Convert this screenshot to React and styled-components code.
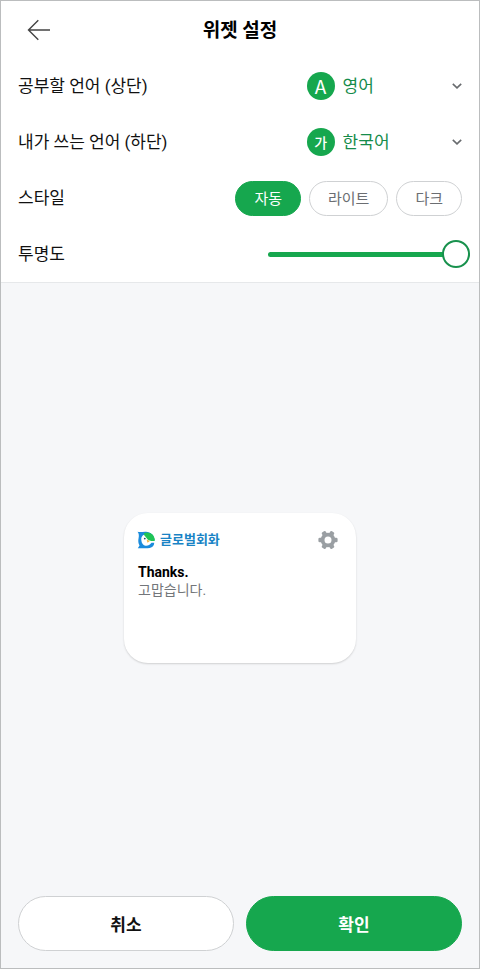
import React, { useState } from "react";
import styled, { createGlobalStyle } from "styled-components";

const green = "#16a74e";

const languages = [
  { code: "en", name: "영어", mark: "A" },
  { code: "ko", name: "한국어", mark: "가" },
];

const styles = ["자동", "라이트", "다크"];

function LanguageRow({ id, label, initial }) {
  const [code, setCode] = useState(initial);
  const current = languages.find((item) => item.code === code);

  return (
    <Row>
      <Label htmlFor={id}>{label}</Label>
      <Picker>
        <Mark aria-hidden="true" $latin={current.code === "en"}>
          {current.mark}
        </Mark>
        <Select id={id} value={code} onChange={(e) => setCode(e.target.value)}>
          {languages.map((item) => (
            <option key={item.code} value={item.code}>
              {item.name}
            </option>
          ))}
        </Select>
        <Chevron width="10" height="6" viewBox="0 0 10 6" aria-hidden="true">
          <path d="M.8.800 5 4.800 9.200.800" />
        </Chevron>
      </Picker>
    </Row>
  );
}

function Logo() {
  return (
    <svg width="18" height="18" viewBox="0 0 18 18" aria-hidden="true">
      <path
        fill="#1b8bdc"
        d="M.5.800C3.500 1.600 6 .6 9 .8c4.800.3 8.300 3.600 8.500 8L17 13.500c-1 2.600-3.200 3.800-6.500 3.800H.8l1.700-2.800C1.200 12.500 1 9.500 1.600 7 2.100 4.700 2 2.500.5.800Z"
      />
      <path
        fill="#fff"
        d="M4.300 9C4 5.700 5.800 3.700 8.200 3.800l4.200 4.500 5.600 1v2.500h-3.500c-1.500 2.200-3.700 3.100-5.900 2.900C6.300 14.500 4.500 12.300 4.300 9Z"
      />
      <path
        fill="#1fc455"
        d="M6.800 2.200C12 .2 17.600 3 17.900 9.800c-2.800.6-5.400.2-7.200-1.200L7.500 4.500Z"
      />
      <path fill="#f5b63c" d="m9.600 8.400 3.200 1.600-2.300 1.800Z" />
      <circle cx="7.800" cy="7.600" r=".9" fill="#24506a" />
    </svg>
  );
}

function Gear() {
  return (
    <svg width="20" height="20" viewBox="0 0 20 20" aria-hidden="true">
      <circle cx="10" cy="10" r="5.400" fill="none" stroke="#9a9fa3" strokeWidth="3.800" />
      {[0, 60, 120, 180, 240, 300].map((angle) => (
        <rect
          key={angle}
          x="15"
          y="7.700"
          width="4.600"
          height="4.600"
          rx="1.400"
          fill="#9a9fa3"
          transform={`rotate(${angle} 10 10)`}
        />
      ))}
    </svg>
  );
}

function App() {
  const [style, setStyle] = useState(styles[0]);
  const [opacity, setOpacity] = useState(100);

  return (
    <>
      <GlobalStyle />
      <Screen>
        <Settings>
          <Header>
            <Back type="button" aria-label="뒤로">
              <svg width="24" height="22" viewBox="0 0 24 22" aria-hidden="true">
                <path d="M23 11H1.500M11.300 1.300 1.500 11l9.800 9.700" />
              </svg>
            </Back>
            <Title>위젯 설정</Title>
          </Header>
          <LanguageRow id="study" label="공부할 언어 (상단)" initial="en" />
          <LanguageRow id="native" label="내가 쓰는 언어 (하단)" initial="ko" />
          <Row>
            <Label as="span" id="style">
              스타일
            </Label>
            <Chips role="group" aria-labelledby="style">
              {styles.map((name) => (
                <Chip
                  key={name}
                  type="button"
                  $active={name === style}
                  aria-pressed={name === style}
                  onClick={() => setStyle(name)}
                >
                  {name}
                </Chip>
              ))}
            </Chips>
          </Row>
          <Row>
            <Label htmlFor="opacity">투명도</Label>
            <Slider
              id="opacity"
              type="range"
              min="0"
              max="100"
              value={opacity}
              onChange={(e) => setOpacity(Number(e.target.value))}
              style={{ "--value": `${opacity}%` }}
            />
          </Row>
        </Settings>
        <Preview>
          <Widget>
            <WidgetTop>
              <Logo />
              <Brand>글로벌회화</Brand>
              <GearButton type="button" aria-label="설정">
                <Gear />
              </GearButton>
            </WidgetTop>
            <Phrase>Thanks.</Phrase>
            <Meaning>고맙습니다.</Meaning>
          </Widget>
        </Preview>
        <Footer>
          <Action type="button">취소</Action>
          <Action type="button" $primary>
            확인
          </Action>
        </Footer>
      </Screen>
    </>
  );
}

const GlobalStyle = createGlobalStyle`
  * {
    box-sizing: border-box;
  }
  body {
    margin: 0;
    font-family: Roboto, "Noto Sans CJK KR", sans-serif;
    color: #111;
  }
  button,
  select {
    font-family: inherit;
    cursor: pointer;
  }
`;

const Screen = styled.div`
  display: flex;
  flex-direction: column;
  min-height: 100vh;
  background: #f6f7f9;
  border: 1px solid #bbbdbe;
`;

const Settings = styled.section`
  background: #fff;
  border-bottom: 1px solid #e6e8ea;
`;

const Header = styled.header`
  display: grid;
  grid-template-columns: 1fr auto 1fr;
  align-items: center;
  height: 57px;
  padding: 0 26px;
`;

const Back = styled.button`
  display: flex;
  justify-self: start;
  padding: 0;
  border: 0;
  background: none;

  path {
    fill: none;
    stroke: #444;
    stroke-width: 1.4;
  }
`;

const Title = styled.h1`
  margin: 0;
  padding-top: 2px;
  font-size: 19px;
  line-height: 26px;
  font-weight: 700;
  color: #000;
`;

const Row = styled.div`
  display: flex;
  align-items: center;
  justify-content: space-between;
  height: 56px;
  padding: 0 17px;
`;

const Label = styled.label`
  font-size: 17px;
  line-height: 24px;
`;

const Picker = styled.div`
  display: flex;
  align-items: center;
  width: 35%;
`;

const Mark = styled.span`
  display: flex;
  flex: none;
  align-items: center;
  justify-content: center;
  width: 28px;
  height: 28px;
  margin-right: 8px;
  border-radius: 50%;
  background: ${green};
  color: #fff;
  font-family: "Noto Sans CJK KR", sans-serif;
  font-size: ${(props) => (props.$latin ? "19px" : "14px")};
  font-weight: ${(props) => (props.$latin ? 400 : 500)};
  line-height: 20px;
`;

const Select = styled.select`
  flex: 1;
  min-width: 0;
  height: 32px;
  margin-right: -10px;
  padding: 0 10px 0 0;
  border: 0;
  appearance: none;
  background: none;
  color: #168c4b;
  font-size: 17px;
`;

const Chevron = styled.svg`
  flex: none;
  pointer-events: none;
  fill: none;
  stroke: #686b6e;
  stroke-width: 1.6;
`;

const Chips = styled.div`
  display: flex;
  gap: 8px;
`;

const Chip = styled.button`
  height: 35px;
  padding: 0 18px 2px;
  border: 1px solid ${(props) => (props.$active ? green : "#cfd1d3")};
  border-radius: 18px;
  background: ${(props) => (props.$active ? green : "#fff")};
  color: ${(props) => (props.$active ? "#fff" : "#6b6e72")};
  font-size: 15px;
`;

const Slider = styled.input`
  width: 202px;
  height: 28px;
  margin: 0 -8px 0 0;
  appearance: none;
  background: none;

  &::-webkit-slider-runnable-track {
    height: 5px;
    border-radius: 3px;
    background: linear-gradient(${green}, ${green}) 0 0 / var(--value) 100% no-repeat #dfe2e4;
  }

  &::-webkit-slider-thumb {
    appearance: none;
    width: 28px;
    height: 28px;
    margin-top: -12px;
    border: 2px solid #18914d;
    border-radius: 50%;
    background: #fff;
  }
`;

const Preview = styled.main`
  display: flex;
  flex: 1;
  align-items: center;
  justify-content: center;
  padding: 24px;
`;

const Widget = styled.article`
  width: 232px;
  min-height: 150px;
  padding: 17px 14px;
  border-radius: 24px;
  background: #fff;
  box-shadow: 0 1px 2px rgba(0, 0, 0, 0.16);
`;

const WidgetTop = styled.div`
  display: flex;
  align-items: center;
  height: 20px;
  margin: 0 0 13px -1px;
`;

const Brand = styled.span`
  flex: 1;
  margin-left: 5px;
  color: #1983c5;
  font-size: 13px;
  font-weight: 700;
  line-height: 20px;
`;

const GearButton = styled.button`
  display: flex;
  margin-right: 4px;
  padding: 0;
  border: 0;
  background: none;
`;

const Phrase = styled.p`
  margin: 0;
  color: #000;
  font-size: 14px;
  font-weight: 700;
  line-height: 18px;
`;

const Meaning = styled.p`
  margin: 0;
  color: #73767a;
  font-size: 14px;
  line-height: 18px;
`;

const Footer = styled.footer`
  display: flex;
  gap: 12px;
  padding: 4px 17px 17px;
`;

const Action = styled.button`
  flex: 1;
  height: 55px;
  border: 1px solid ${(props) => (props.$primary ? green : "#cfd1d3")};
  border-radius: 28px;
  background: ${(props) => (props.$primary ? green : "#fff")};
  color: ${(props) => (props.$primary ? "#fff" : "#111")};
  font-size: 17px;
  font-weight: 700;
`;

export default App;
